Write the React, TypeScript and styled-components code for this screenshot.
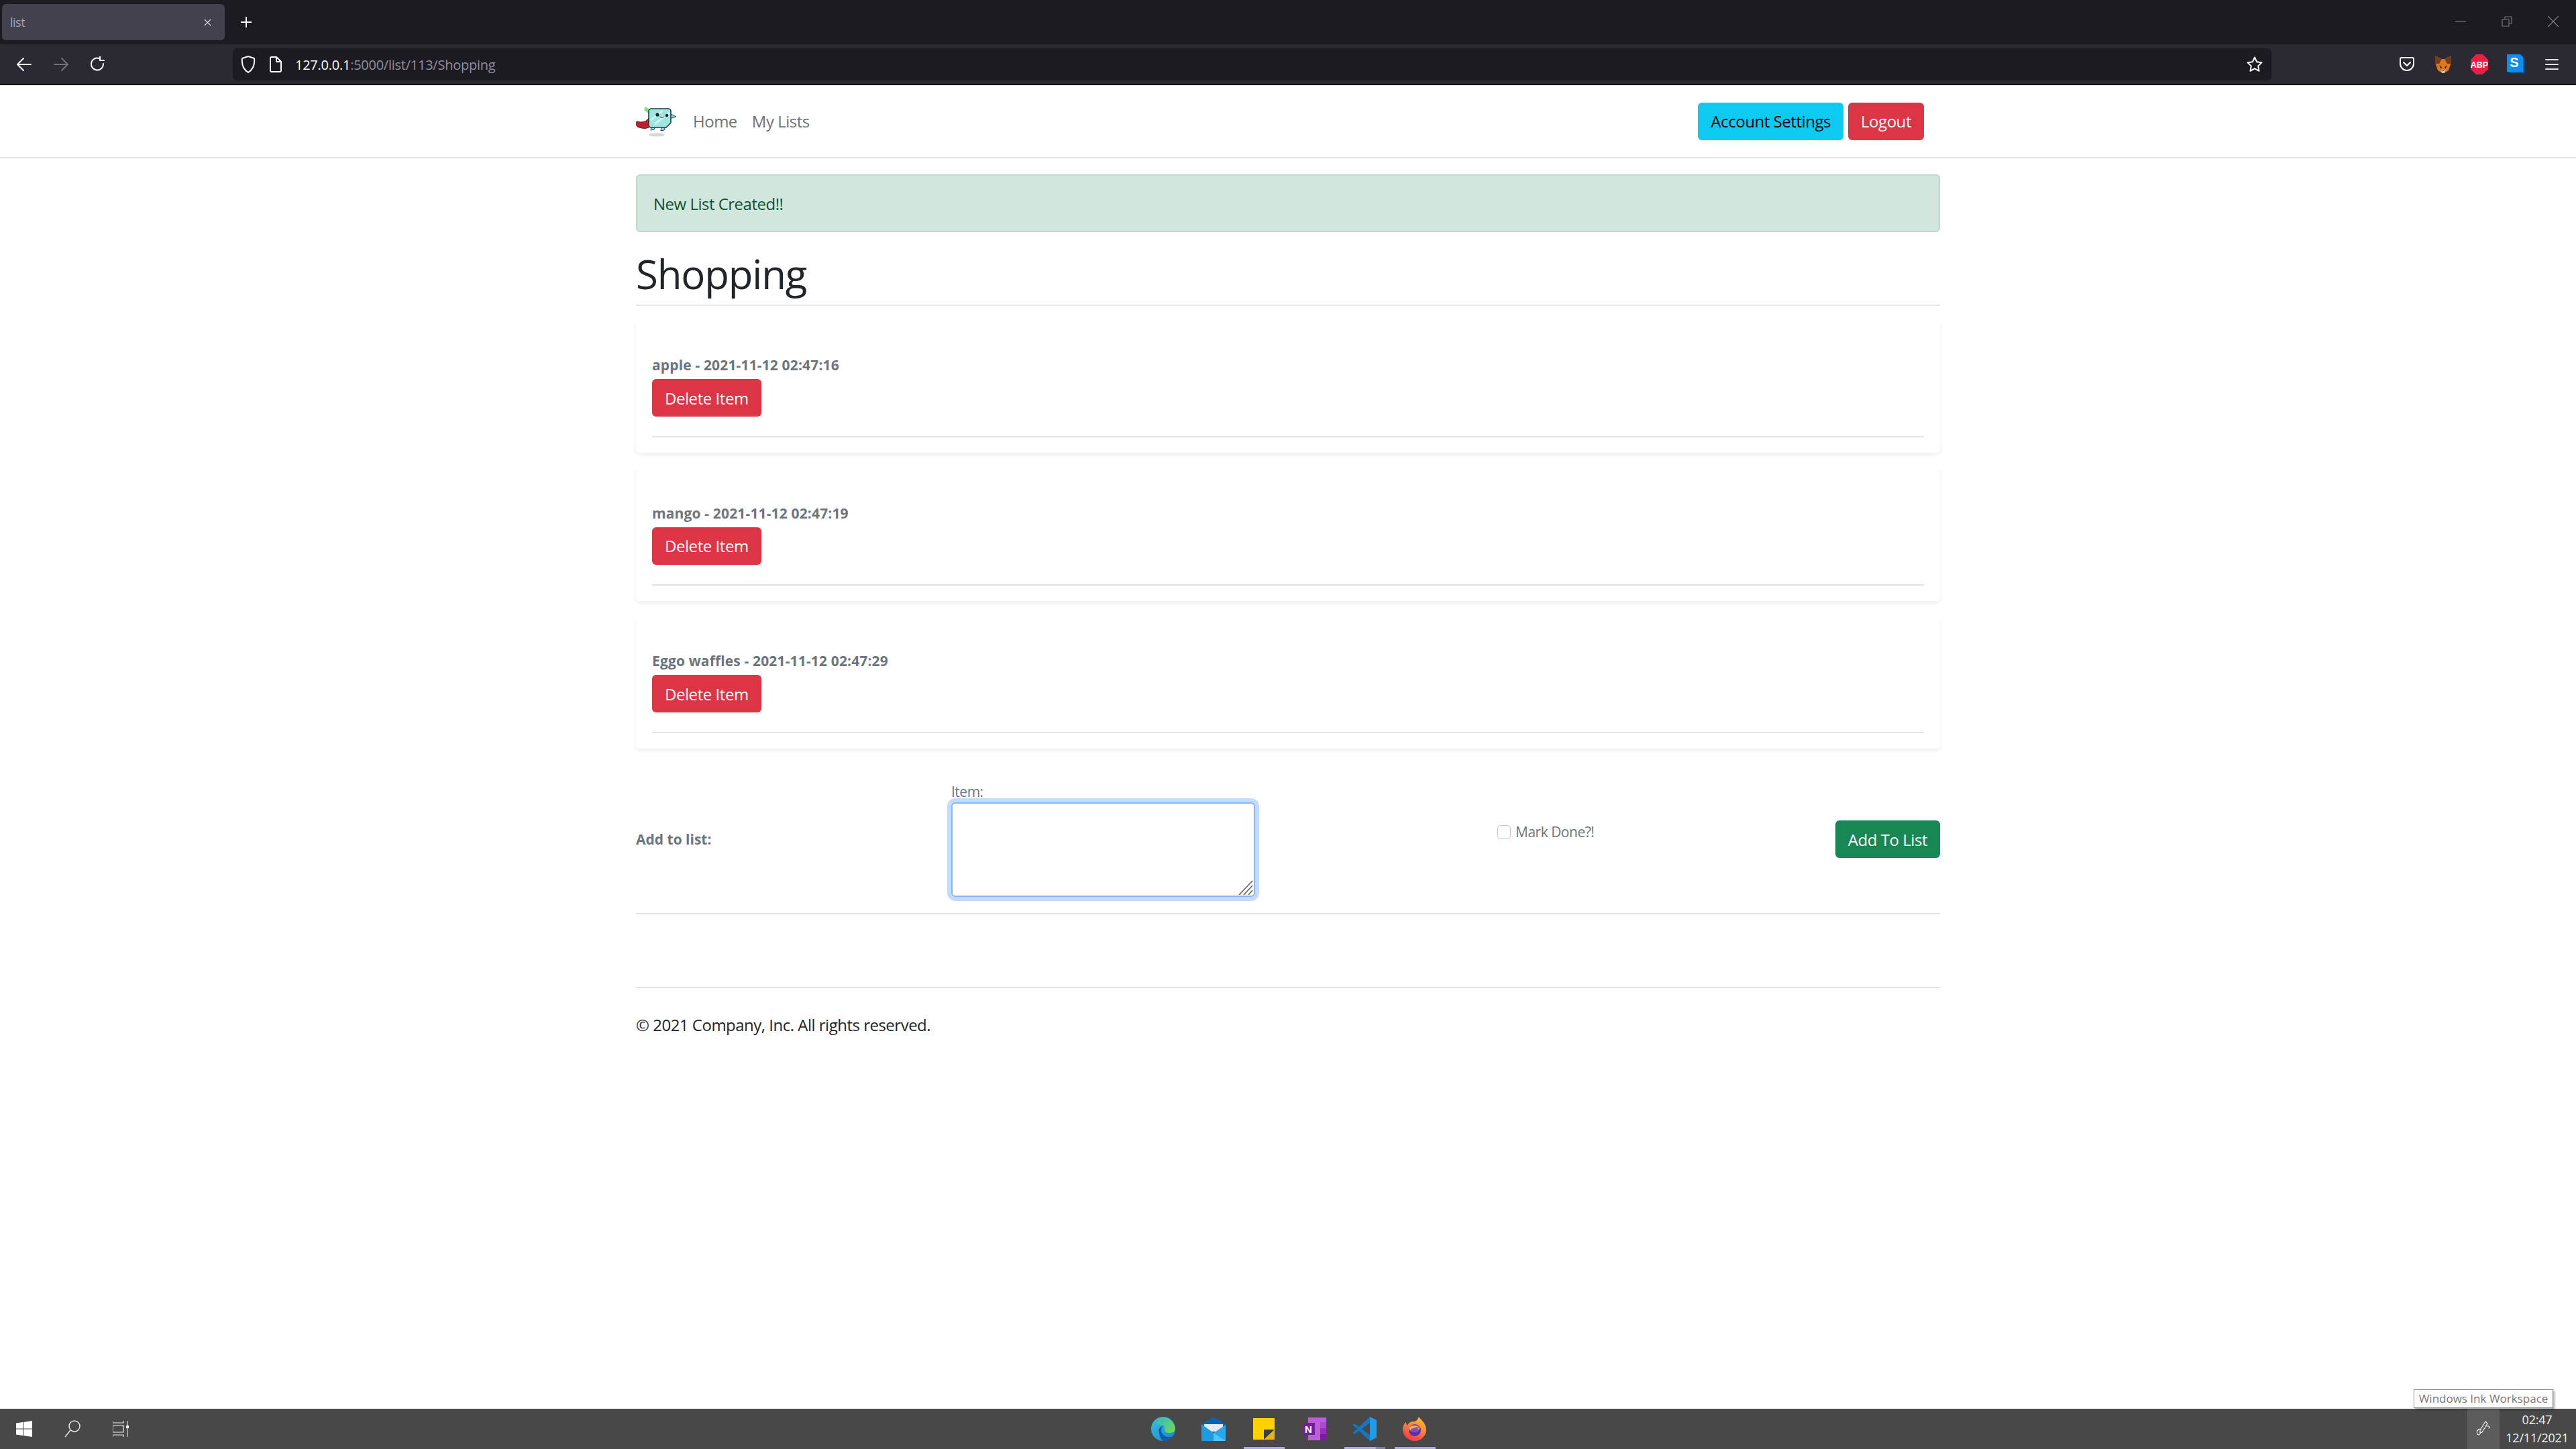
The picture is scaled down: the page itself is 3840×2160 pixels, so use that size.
import React from "react";
import styled, { createGlobalStyle } from "styled-components";

const FONT = `"Open Sans", "Noto Sans", "Liberation Sans", sans-serif`;

const GlobalStyle = createGlobalStyle`
  html, body {
    margin: 0;
    padding: 0;
    background: #fff;
    overflow: hidden;
  }
  * { box-sizing: border-box; }
`;

const Screen = styled.div`
  width: 3840px;
  height: 2160px;
  display: flex;
  flex-direction: column;
  position: relative;
  font-family: ${FONT};
  letter-spacing: -0.5px;
  color: #212529;
`;

/* browser chrome */
const TabStrip = styled.div`
  height: 66px;
  background: #1c1b22;
  display: flex;
  align-items: flex-start;
  padding: 6px 0 0 3px;
`;

const Tab = styled.div`
  width: 332px;
  height: 54px;
  background: #42414d;
  border-radius: 6px;
  display: flex;
  align-items: center;
  justify-content: space-between;
  padding: 0 20px 0 12px;
  font-size: 18px;
  color: #a5a5ac;
`;

const NewTab = styled.div`
  margin: 18px 0 0 23px;
  display: flex;
`;

const WindowButtons = styled.div`
  margin-left: auto;
  display: flex;
  align-items: center;
  gap: 53px;
  padding: 18px 26px 0 0;
`;

const Toolbar = styled.div`
  height: 61px;
  background: #2b2a33;
  border-bottom: 2px solid #0d0c11;
  display: flex;
  align-items: center;
  padding: 0 0 0 24px;
`;

const NavIcons = styled.div`
  display: flex;
  align-items: center;
  gap: 31px;
  width: 323px;
`;

const UrlBar = styled.div`
  width: 3039px;
  height: 48px;
  background: #1c1b22;
  border-radius: 6px;
  display: flex;
  align-items: center;
  padding: 0 13px 0 12px;
`;

const UrlText = styled.div`
  margin-left: 20px;
  padding-top: 1px;
  font-size: 20px;
  letter-spacing: -0.25px;
  color: #8f8f9d;
  flex: 1;
  span {
    color: #fbfbfe;
  }
`;

const Extensions = styled.div`
  display: flex;
  align-items: center;
  margin-left: 175px;
`;

const ExtSlot = styled.div`
  width: 54px;
  display: flex;
  align-items: center;
  justify-content: center;
`;

/* page */
const Page = styled.div`
  flex: 1;
  background: #fff;
  min-height: 0;
`;

const NavBar = styled.nav`
  height: 109px;
  border-bottom: 2px solid #e3e4e5;
`;

const Container = styled.div`
  width: 1944px;
  margin: 0 auto;
`;

const NavInner = styled(Container)`
  height: 107px;
  display: flex;
  align-items: center;
  padding-right: 24px;
`;

const NavLink = styled.a<{ $gap: number }>`
  font-size: 24px;
  color: #6d7278;
  margin-left: ${(p) => p.$gap}px;
`;

const NavRight = styled.div`
  margin-left: auto;
  display: flex;
  gap: 7px;
`;

const Button = styled.button<{ $variant: "info" | "danger" | "success" }>`
  height: 56px;
  padding: 0 19px;
  border: none;
  border-radius: 6px;
  font-family: ${FONT};
  font-size: 24px;
  letter-spacing: -0.45px;
  display: block;
  background: ${(p) =>
    p.$variant === "info" ? "#0dcaf0" : p.$variant === "danger" ? "#dc3545" : "#198754"};
  color: ${(p) => (p.$variant === "info" ? "#000" : "#fff")};
`;

const Alert = styled.div`
  margin-top: 24px;
  height: 86px;
  background: #d1e7dd;
  border: 2px solid #badbcc;
  border-radius: 6px;
  display: flex;
  align-items: center;
  padding: 0 24px;
  font-size: 24px;
  color: #0f5132;
`;

const Title = styled.h1`
  margin: 0;
  height: 110px;
  padding-top: 26px;
  font-size: 60px;
  font-weight: 400;
  line-height: 72px;
  letter-spacing: -1.2px;
  color: #212529;
  border-bottom: 2px solid #e9e9ea;
`;

const Items = styled.div`
  display: flex;
  flex-direction: column;
  gap: 23.5px;
  margin-top: 22px;
`;

const Card = styled.div`
  height: 197px;
  padding: 48px 24px 0;
  background: #fff;
  border-radius: 6px;
  box-shadow: 0 3px 6px rgba(0, 0, 0, 0.075);
`;

const ItemTitle = styled.div`
  height: 39px;
  font-size: 21px;
  line-height: 36px;
  font-weight: 700;
  letter-spacing: 0.15px;
  color: #6c757d;
`;

const CardRule = styled.div`
  margin-top: 29px;
  height: 2px;
  background: #e3e4e5;
`;

const AddForm = styled.form`
  margin-top: 49px;
  height: 172px;
  display: grid;
  grid-template-columns: 470px 814px 1fr auto;
  align-items: center;
`;

const AddLabel = styled.div`
  font-size: 21px;
  font-weight: 700;
  letter-spacing: 0;
  color: #6c757d;
`;

const Field = styled.div`
  display: flex;
  flex-direction: column;
  font-size: 21px;
  color: #6c757d;
`;

const FieldLabel = styled.label`
  height: 31px;
  line-height: 31px;
`;

const TextArea = styled.div`
  width: 453px;
  height: 141px;
  position: relative;
  background: #fff;
  border: 2px solid #86b7fe;
  border-radius: 6px;
  box-shadow: 0 0 0 6px #c2dbfe;
`;

const Resize = styled.svg`
  position: absolute;
  right: 1px;
  bottom: 1px;
`;

const CheckRow = styled.div`
  display: flex;
  align-items: center;
  gap: 7px;
  margin-bottom: 22px;
  font-size: 21px;
  color: #6c757d;
`;

const CheckBox = styled.div`
  width: 20px;
  height: 21px;
  border: 1.5px solid #c4c6c8;
  border-radius: 5px;
  background: #fff;
`;

const PageRule = styled.div`
  margin-top: 24px;
  height: 2px;
  background: #e3e4e5;
`;

const Footer = styled.footer`
  margin-top: 108px;
  border-top: 2px solid #e3e4e5;
  padding-top: 37px;
  font-size: 24px;
  line-height: 36px;
`;

/* windows taskbar */
const Taskbar = styled.div`
  height: 60px;
  background: #484848;
  display: grid;
  grid-template-columns: 1fr auto 1fr;
  align-items: center;
`;

const TaskLeft = styled.div`
  display: flex;
  align-items: center;
  height: 100%;
`;

const TaskSlot = styled.div`
  width: 72px;
  height: 100%;
  display: flex;
  align-items: center;
  justify-content: center;
`;

const TaskCenter = styled.div`
  display: flex;
  height: 100%;
  margin-left: 3px;
`;

const AppSlot = styled.div`
  width: 75px;
  height: 100%;
  position: relative;
  display: flex;
  align-items: center;
  justify-content: center;
`;

const OpenMark = styled.div<{ $stacked?: boolean }>`
  position: absolute;
  left: 7px;
  right: 7px;
  bottom: 0;
  height: 3px;
  background: ${(p) =>
    p.$stacked ? "linear-gradient(to right, #aaa7ea 47px, #7f7db4 47px)" : "#aaa7ea"};
`;

const Tray = styled.div`
  display: flex;
  justify-content: flex-end;
  align-items: center;
  height: 100%;
`;

const PenButton = styled.div`
  width: 48px;
  height: 100%;
  background: #5c5c5c;
  display: flex;
  align-items: center;
  justify-content: center;
`;

const Clock = styled.div`
  width: 114px;
  text-align: center;
  font-size: 18px;
  line-height: 27px;
  letter-spacing: -0.2px;
  color: #f0f0f0;
  padding-right: 2px;
`;

const Tooltip = styled.div`
  position: absolute;
  left: 3598px;
  top: 2071px;
  width: 208px;
  height: 28px;
  background: #fff;
  border: 1px solid #8c8c8c;
  box-shadow: 2px 2px 3px rgba(0, 0, 0, 0.35);
  font-size: 17px;
  line-height: 26px;
  letter-spacing: 0;
  color: #777;
  text-align: center;
  white-space: nowrap;
`;

const Line = { fill: "none", strokeLinecap: "round", strokeLinejoin: "round" } as const;

const Logo = () => (
  <svg width="60" height="47" viewBox="0 0 60 47">
    <path d="M14 2l14 10-4 4-12-9z" fill="#7fe07f" />
    <path d="M19 19C15 25 9 26 1 24c-2 4 0 9 4 9 6 2 11 2 16-1z" fill="#c21f33" stroke="#5d1620" strokeWidth="1" />
    <path d="M24 30l-2 7 5-1 3-6zM38 32l-1 6 5-1 2-6z" fill="#8ee0dc" stroke="#23474b" strokeWidth="1" />
    <path d="M50 12l10 5-10 3z" fill="#8ee0dc" stroke="#23474b" strokeWidth="1" />
    <path d="M23 5h25a4 4 0 0 1 4 4v17l-7 7H23a4 4 0 0 1-4-4V9a4 4 0 0 1 4-4z" fill="#9fe6e1" stroke="#1f3b40" strokeWidth="1.6" />
    <path d="M22 22L40 8M28 28L50 11" stroke="#c9f4f0" strokeWidth="3" />
    <circle cx="32" cy="14" r="2.6" fill="#16262a" />
    <circle cx="46" cy="15" r="2.3" fill="#16262a" />
    <path d="M36 17c1 2 4 2 6 0" {...Line} stroke="#16262a" strokeWidth="1" />
    <ellipse cx="31" cy="44" rx="12" ry="2.5" fill="#d6d6d6" />
  </svg>
);

const Fox = () => (
  <svg width="26" height="28" viewBox="0 0 26 28">
    <path d="M1 1l10 5h4l10-5-1 13-3 9-5 3H10l-5-3-3-9z" fill="#e2761b" />
    <path d="M1 1l10 5-4 7-6 0zM25 1L15 6l4 7 6 0z" fill="#763d16" />
    <path d="M7 15l4 3-1 3zM19 15l-4 3 1 3z" fill="#233447" />
    <path d="M10 23l3-2 3 2-1 4h-4z" fill="#d7c1b3" />
    <path d="M11.5 22h3l-1.500 2z" fill="#161616" />
  </svg>
);

const Abp = () => (
  <svg width="26" height="30" viewBox="0 0 26 30">
    <path d="M8 0h10l8 8v14l-8 8H8l-8-8V8z" fill="#ed1e45" />
    <text x="13" y="20" textAnchor="middle" fontFamily="Liberation Sans, sans-serif" fontWeight="700" fontSize="12.500" fill="#fff" letterSpacing="0">ABP</text>
  </svg>
);

const StackBlue = () => (
  <svg width="26" height="30" viewBox="0 0 26 30">
    <path d="M24 4l2 2v24l-2-2z" fill="#0b5a9e" />
    <path d="M0 24h24v4H4z" fill="#0b5a9e" />
    <path d="M0 0h20l4 4v22H0z" fill="#0a8ff0" />
    <text x="11" y="19" textAnchor="middle" fontFamily="Liberation Sans, sans-serif" fontWeight="700" fontSize="20" fill="#fff" letterSpacing="0">S</text>
  </svg>
);

const Edge = () => (
  <svg width="36" height="36" viewBox="0 0 36 36">
    <defs>
      <linearGradient id="edgeA" x1="0" y1="0" x2="1" y2="1">
        <stop offset="0" stopColor="#36c3d8" />
        <stop offset="1" stopColor="#1b7fd1" />
      </linearGradient>
      <linearGradient id="edgeB" x1="0" y1="0" x2="1" y2="0.6">
        <stop offset="0" stopColor="#2fb8c6" />
        <stop offset="1" stopColor="#6bd65f" />
      </linearGradient>
    </defs>
    <circle cx="18" cy="18" r="18" fill="url(#edgeA)" />
    <path d="M6 6C14-3 32-1 36 17c0 5-4 7-9 7-5 0-7-2-7-4 2-4-2-8-7-8-4 0-6-3-7-6z" fill="url(#edgeB)" />
    <path d="M12 24c-2-6 2-11 8-11-5 1-6 6-4 11 3 6 11 8 17 4-4 6-10 8-15 8-4-3-5-7-6-12z" fill="#0f5cab" />
  </svg>
);

const Mail = () => (
  <svg width="36" height="36" viewBox="0 0 36 36">
    <path d="M0 11L18 0l18 11v4H0z" fill="#0a62b5" />
    <path d="M4 11h28v11H4z" fill="#e9e9ef" />
    <path d="M0 12l18 12 18-12v22a2 2 0 0 1-2 2H2a2 2 0 0 1-2-2z" fill="#28a8ea" />
    <path d="M0 12v-1l18 13v12H2a2 2 0 0 1-2-2z" fill="#1f9ae0" />
    <path d="M18 24l18 12H18z" fill="#50c4f5" />
  </svg>
);

const Sticky = () => (
  <svg width="32" height="32" viewBox="0 0 32 32">
    <path d="M1 0h30a1 1 0 0 1 1 1v17L18 32H1a1 1 0 0 1-1-1V1a1 1 0 0 1 1-1z" fill="#fdd205" />
    <path d="M32 17L16 32v-15z" fill="#3d3d3d" />
    <path d="M32 17v14a1 1 0 0 1-1 1H17z" fill="#eab40f" />
  </svg>
);

const OneNote = () => (
  <svg width="36" height="34" viewBox="0 0 36 34">
    <path d="M9 0h27v34H9z" fill="#ba5fd8" />
    <path d="M27 7h9v9h-9z" fill="#aa4cc9" />
    <path d="M27 16h9v9h-9z" fill="#9430b5" />
    <path d="M27 25h9v9h-9z" fill="#7a1ba0" />
    <path d="M0 8h19v18H0z" fill="#6f1f9f" />
    <text x="9.500" y="22.500" textAnchor="middle" fontFamily="Liberation Sans, sans-serif" fontWeight="700" fontSize="15" fill="#fff" letterSpacing="0">N</text>
  </svg>
);

const VsCode = () => (
  <svg width="36" height="36" viewBox="0 0 36 36">
    <path d="M26 0L10 15 3 10l-3 2 7 6-7 6 3 2 7-5 16 15z" fill="#0e78c2" />
    <path d="M26 0l10 5v26l-10 5z" fill="#1f9ce8" />
    <path d="M26 9L14 18l12 9z" fill="#484848" />
  </svg>
);

const Firefox = () => (
  <svg width="36" height="36" viewBox="0 0 36 36">
    <defs>
      <linearGradient id="foxA" x1="0.7" y1="0" x2="0.2" y2="1">
        <stop offset="0" stopColor="#ffbd2e" />
        <stop offset="0.55" stopColor="#ff7139" />
        <stop offset="1" stopColor="#f0304f" />
      </linearGradient>
    </defs>
    <path d="M24 0c2 4 10 8 11 18 1 9-7 18-17 18S0 28 0 19c0-5 2-9 5-11 0 2 1 4 2 5 2-5 6-6 9-6 4 0 5-1 8-7z" fill="url(#foxA)" />
    <circle cx="18" cy="20" r="9" fill="#5b2fa8" />
    <path d="M9 17c3-5 13-6 17 0-3-2-6-2-8-1l7 1c0 3-3 5-7 5-5 0-8-2-9-5z" fill="#ffb03a" />
    <ellipse cx="18" cy="20" rx="6" ry="3.500" fill="#7f49d1" />
  </svg>
);

const apps: { key: string; open?: boolean; stacked?: boolean; icon: React.ReactNode }[] = [
  { key: "edge", icon: <Edge /> },
  { key: "mail", icon: <Mail /> },
  { key: "sticky", open: true, icon: <Sticky /> },
  { key: "onenote", icon: <OneNote /> },
  { key: "code", open: true, stacked: true, icon: <VsCode /> },
  { key: "firefox", open: true, icon: <Firefox /> },
];

const items = ["apple - 2021-11-12 02:47:16", "mango - 2021-11-12 02:47:19", "Eggo waffles - 2021-11-12 02:47:29"];

const App = () => (
  <Screen>
    <GlobalStyle />
    <TabStrip>
      <Tab>
        list
        <svg width="11" height="11" viewBox="0 0 11 11">
          <path d="M1 1l9 9M10 1l-9 9" stroke="#d8d8dc" strokeWidth="1.2" />
        </svg>
      </Tab>
      <NewTab>
        <svg width="18" height="18" viewBox="0 0 18 18">
          <path d="M9 1v16M1 9h16" stroke="#fbfbfe" strokeWidth="2" />
        </svg>
      </NewTab>
      <WindowButtons>
        <svg width="16" height="16" viewBox="0 0 16 16">
          <path d="M0 8h16" stroke="#77767c" strokeWidth="1.2" />
        </svg>
        <svg width="16" height="16" viewBox="0 0 16 16">
          <path d="M1 5h10v10H1zM5 5V1h10v10h-4" {...Line} stroke="#77767c" strokeWidth="1.2" />
        </svg>
        <svg width="16" height="16" viewBox="0 0 16 16">
          <path d="M0 0l16 16M16 0L0 16" stroke="#8b8a90" strokeWidth="1.2" />
        </svg>
      </WindowButtons>
    </TabStrip>
    <Toolbar>
      <NavIcons>
        <svg width="24" height="24" viewBox="0 0 24 24">
          <path d="M22 12H3M11 3l-9 9 9 9" {...Line} stroke="#fbfbfe" strokeWidth="2" />
        </svg>
        <svg width="24" height="24" viewBox="0 0 24 24">
          <path d="M2 12h19M13 3l9 9-9 9" {...Line} stroke="#74737b" strokeWidth="2" />
        </svg>
        <svg width="24" height="24" viewBox="0 0 24 24">
          <path d="M20 11a9 9 0 1 1-6-8M15 0v6h6" {...Line} stroke="#fbfbfe" strokeWidth="2" />
        </svg>
      </NavIcons>
      <UrlBar>
        <svg width="22" height="26" viewBox="0 0 22 26">
          <path d="M11 1l9 3c1 9-1 16-9 21C3 20 1 13 2 4z" {...Line} stroke="#fbfbfe" strokeWidth="2" />
        </svg>
        <svg width="18" height="24" viewBox="0 0 18 24" style={{ marginLeft: 21 }}>
          <path d="M3 1h7l7 7v13a2 2 0 0 1-2 2H3a2 2 0 0 1-2-2V3a2 2 0 0 1 2-2zM10 1v7h7" {...Line} stroke="#fbfbfe" strokeWidth="2" />
        </svg>
        <UrlText>
          <span>127.0.0.1</span>:5000/list/113/Shopping
        </UrlText>
        <svg width="24" height="24" viewBox="0 0 24 24">
          <path d="M12 1.500l3.200 6.800 7.300 1-5.300 5.100 1.300 7.400-6.500-3.600-6.500 3.600 1.300-7.400L1.500 9.300l7.300-1z" {...Line} stroke="#fbfbfe" strokeWidth="2" />
        </svg>
      </UrlBar>
      <Extensions>
        <ExtSlot>
          <svg width="22" height="24" viewBox="0 0 22 24">
            <path d="M3 2h16a2 2 0 0 1 2 2v7a10 10 0 0 1-20 0V4a2 2 0 0 1 2-2zM6 9l5 5 5-5" {...Line} stroke="#fbfbfe" strokeWidth="2" />
          </svg>
        </ExtSlot>
        <ExtSlot>
          <Fox />
        </ExtSlot>
        <ExtSlot>
          <Abp />
        </ExtSlot>
        <ExtSlot>
          <StackBlue />
        </ExtSlot>
        <ExtSlot>
          <svg width="20" height="18" viewBox="0 0 20 18">
            <path d="M1 2h18M1 9h18M1 16h18" {...Line} stroke="#e4e4ea" strokeWidth="2" />
          </svg>
        </ExtSlot>
      </Extensions>
    </Toolbar>
    <Page>
      <NavBar>
        <NavInner>
          <Logo />
          <NavLink $gap={25}>Home</NavLink>
          <NavLink $gap={22}>My Lists</NavLink>
          <NavRight>
            <Button $variant="info">Account Settings</Button>
            <Button $variant="danger">Logout</Button>
          </NavRight>
        </NavInner>
      </NavBar>
      <Container>
        <Alert>New List Created!!</Alert>
        <Title>Shopping</Title>
        <Items>
          {items.map((item) => (
            <Card key={item}>
              <ItemTitle>{item}</ItemTitle>
              <Button $variant="danger">Delete Item</Button>
              <CardRule />
            </Card>
          ))}
        </Items>
        <AddForm>
          <AddLabel>Add to list:</AddLabel>
          <Field>
            <FieldLabel>Item:</FieldLabel>
            <TextArea>
              <Resize width="22" height="22" viewBox="0 0 22 22">
                <path d="M1 22L21 1M8 22L21 8M15 22l6-7" stroke="#5f5f5f" strokeWidth="1.6" fill="none" />
              </Resize>
            </TextArea>
          </Field>
          <CheckRow>
            <CheckBox />
            Mark Done?!
          </CheckRow>
          <Button $variant="success">Add To List</Button>
        </AddForm>
        <PageRule />
        <Footer>© 2021 Company, Inc. All rights reserved.</Footer>
      </Container>
    </Page>
    <Taskbar>
      <TaskLeft>
        <TaskSlot>
          <svg width="24" height="24" viewBox="0 0 24 24">
            <path d="M0 3.500l10-1.500v9.500H0zM11 1.900L24 0v11.500H11zM0 12.500h10V22L0 20.500zM11 12.500h13V24l-13-1.900z" fill="#fff" />
          </svg>
        </TaskSlot>
        <TaskSlot>
          <svg width="24" height="26" viewBox="0 0 24 26">
            <circle cx="15" cy="9" r="8" fill="none" stroke="#e6e6e6" strokeWidth="1.500" />
            <path d="M9 15L1 25" stroke="#e6e6e6" strokeWidth="1.500" />
          </svg>
        </TaskSlot>
        <TaskSlot>
          <svg width="24" height="24" viewBox="0 0 24 24">
            <path d="M0 0v3h16V0M0 7h16v10H0zM0 24v-3h16v3" fill="none" stroke="#f0f0f0" strokeWidth="1.200" />
            <path d="M22 0v24" stroke="#f0f0f0" strokeWidth="1" />
            <path d="M20 7h4v4h-4z" fill="#f0f0f0" />
          </svg>
        </TaskSlot>
      </TaskLeft>
      <TaskCenter>
        {apps.map((app) => (
          <AppSlot key={app.key}>
            {app.icon}
            {app.open && <OpenMark $stacked={app.stacked} />}
          </AppSlot>
        ))}
      </TaskCenter>
      <Tray>
        <PenButton>
          <svg width="24" height="26" viewBox="0 0 24 26">
            <path d="M15 2l3 3-8 13-3 1 0-4zM17 9c4-1 5 2 3 3M8 13c-5 0-7 5-5 8 2 2 4 0 5-3" {...Line} stroke="#f0f0f0" strokeWidth="1.200" />
          </svg>
        </PenButton>
        <Clock>
          02:47
          <br />
          12/11/2021
        </Clock>
      </Tray>
    </Taskbar>
    <Tooltip>Windows Ink Workspace</Tooltip>
  </Screen>
);

export default App;
